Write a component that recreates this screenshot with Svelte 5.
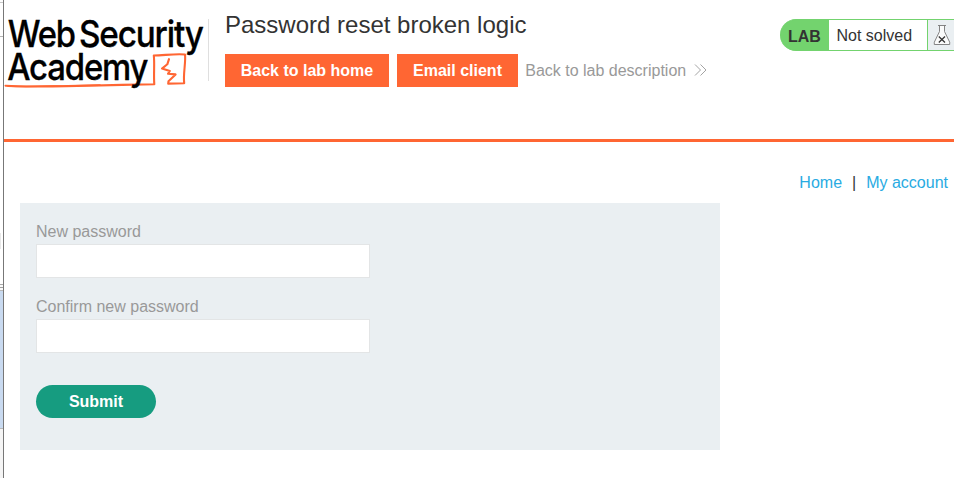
<script>
  const strip = [
    { h: 2, c: '#fdfdfd' }, { h: 1, c: '#c8c8c8' }, { h: 33, c: '#ffffff' },
    { h: 1, c: '#b4b4b4' }, { h: 196, c: '#ffffff' }, { h: 16, c: '#e8e8e8', tab: true },
    { h: 35, c: '#ffffff' }, { h: 1, c: '#a8a8a8' }, { h: 2, c: '#fafafa' },
    { h: 1, c: '#a0a0a0' }, { h: 2, c: '#fafafa' }, { h: 1, c: '#b8b8b8' },
    { h: 137, c: '#c9daf0' }, { h: 1, c: '#b8b8b8' }, { h: 49, c: '#f5f5f5' }
  ];
  let password = $state('');
  let confirmation = $state('');
</script>

<div class="screen">
  <div class="strip">
    {#each strip as s}
      <div class:tab={s.tab} style="height:{s.h}px;background:{s.c}"></div>
    {/each}
  </div>
  <div class="page">
    <header>
      <svg class="logo" width="204" height="92" viewBox="4 4 204 92" role="img" aria-label="Web Security Academy">
        <g fill="none" stroke="#ff6633" stroke-linejoin="round" stroke-linecap="round">
          <path d="M5.5 85.7C25 87.2 45 86.4 66 86.2C94 85.7 125 84.7 154.3 84.3C153.5 74 154.8 64 153.8 55.5C164 55.4 175 53.6 185 54.5C186 62 183 74 184.2 83.2L168.2 83.6L168.5 81.2L175.6 74.4L168 73.8L169.8 71L162 68.6L167.3 64.3L169 59.2" stroke-width="2.1" />
          <path d="M8 86.2C30 87 45 86.2 68 85.7L100 85.1" stroke-width="1.6" />
        </g>
        <g class="word">
          <text x="7.7" y="47.3" textLength="67.2" lengthAdjust="spacingAndGlyphs">Web</text>
          <text x="79" y="47.3" textLength="123.7" lengthAdjust="spacingAndGlyphs">Security</text>
          <text x="7.2" y="80.2" textLength="140.2" lengthAdjust="spacingAndGlyphs">Academy</text>
        </g>
      </svg>
      <div class="rule"></div>
      <div class="heading">
        <h2>Password reset broken logic</h2>
        <div class="actions">
          <a class="btn home" href="#home">Back to lab home</a>
          <a class="btn email" href="#email">Email client</a>
          <a class="back" href="#description">Back to lab description
            <svg width="13" height="14" viewBox="0 0 13 14"><path d="M1 1.5L6.5 7L1 12.5M6.5 1.5L12 7L6.5 12.5" fill="none" stroke="#999" stroke-width=".9" /></svg>
          </a>
        </div>
      </div>
      <div class="status">
        <span class="lab">LAB</span>
        <span class="state">Not solved</span>
        <span class="flask">
          <svg width="18" height="22" viewBox="0 0 18 22" fill="none">
            <path d="M5 1.5H13M6.5 1.5V7.5L1.3 18.2V20.5H16.7V18.2L11.5 7.5V1.5" fill="#fafbfb" stroke="#777" stroke-width=".9" />
            <path d="M5.8 12.5L12 18.5M12 12.5L5.8 18.5" stroke="#333" stroke-width="1.3" />
          </svg>
        </span>
      </div>
    </header>
    <nav><a href="#home">Home</a><span>|</span><a href="#account">My account</a></nav>
    <form onsubmit={(e) => e.preventDefault()}>
      <label for="new">New password</label>
      <input id="new" type="password" bind:value={password} />
      <label for="confirm" class="second">Confirm new password</label>
      <input id="confirm" type="password" bind:value={confirmation} />
      <button type="submit">Submit</button>
    </form>
  </div>
</div>

<style>
  .screen {
    display: flex; height: 478px; overflow: hidden; background: #fff;
    font: 16px/18px "Liberation Sans", Arial, sans-serif; color: #333;
  }
  .strip { width: 3px; flex: none; border-right: 1px solid #777; }
  .tab { width: 1px; }
  .page { flex: 1; min-width: 0; }
  a { text-decoration: none; white-space: nowrap; }
  header { display: flex; height: 139px; border-bottom: 3px solid #ff6633; }
  .logo { display: block; flex: none; margin-top: 4px; overflow: visible; }
  .word { font: 500 37px Inter, Roboto, sans-serif; letter-spacing: -1.3px; fill: #000; stroke: #000; stroke-width: .3px; }
  .rule { flex: none; width: 1px; height: 62px; margin-top: 19px; background: #dfdfdf; }
  .heading { flex: 1; padding-left: 16px; }
  h2 { margin: 11px 0 0; height: 43px; font-size: 24px; line-height: 28px; font-weight: 400; white-space: nowrap; }
  .actions { display: flex; height: 33px; line-height: 33px; }
  .btn { color: #fff; background: #ff6633; font-weight: 700; text-align: center; margin-right: 8px; }
  .home { width: 164px; }
  .email { width: 121px; }
  .back { color: #999; display: flex; align-items: center; gap: 8px; margin-left: -.8px; }
  .back svg { margin-top: -2px; }
  .status {
    flex: none; display: flex; box-sizing: border-box; width: 174px; height: 32px; margin-top: 19px;
    border: solid #73d36e; border-width: 1px 0; border-radius: 16px 0 0 16px; line-height: 32px; overflow: hidden;
    background: #73d36e;
  }
  .lab { width: 49px; box-sizing: border-box; padding-left: 8px; font-weight: 700; line-height: 34px; }
  .state { width: 98px; box-sizing: border-box; padding-left: 7.5px; line-height: 31px; background: #fff; }
  .flask { flex: 1; border-left: 1px solid #73d36e; background: #eaeff2; display: flex; align-items: center; justify-content: center; padding-left: 2px; }
  .flask svg { flex: none; }
  nav { display: flex; justify-content: flex-end; margin-top: 32px; padding-right: 6px; height: 29px; }
  nav a { color: #29abe2; }
  nav span { margin: 0 10px; }
  form {
    box-sizing: border-box; width: 700px; height: 247px; margin-left: 16px; padding: 20px 16px 0;
    background: #eaeff2; display: flex; flex-direction: column; align-items: flex-start;
  }
  label { height: 21px; color: #999; }
  .second { margin-top: 20px; }
  input { box-sizing: border-box; width: 334px; height: 34px; margin: 0; padding: 0 8px; border: 1px solid #e3e5e6; border-radius: 0; background: #fff; font: inherit; outline: none; }
  button { width: 120px; height: 33px; margin-top: 32px; padding: 0; border: 0; border-radius: 17px; background: #169c80; color: #fff; font: 700 16px "Liberation Sans", Arial, sans-serif; }
</style>
